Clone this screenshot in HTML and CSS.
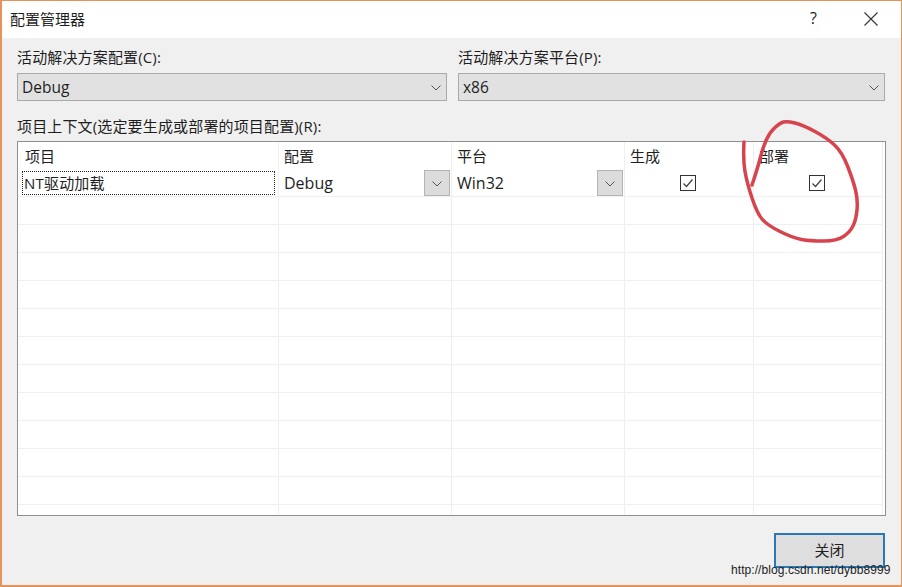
FILE: index.html
```html
<!DOCTYPE html>
<html lang="zh-CN">
<head>
<meta charset="utf-8">
<title>配置管理器</title>
<link rel="stylesheet" href="styles.css">
</head>
<body>
<div class="window">
  <header class="titlebar">
    <span class="title">配置管理器</span>
    <span class="help">?</span>
    <svg class="close" viewBox="0 0 14 14"><path d="M.5.5l13 13M13.5.5l-13 13"/></svg>
  </header>
  <main class="content">
    <div class="fields">
      <div class="field field-a">
        <label class="label">活动解决方案配置(C):</label>
        <div class="combo"><span class="combo-text">Debug</span><svg class="chev" viewBox="0 0 10 6"><path d="M.5.5L5 5 9.5.5"/></svg></div>
      </div>
      <div class="field field-b">
        <label class="label">活动解决方案平台(P):</label>
        <div class="combo"><span class="combo-text">x86</span><svg class="chev" viewBox="0 0 10 6"><path d="M.5.5L5 5 9.5.5"/></svg></div>
      </div>
    </div>
    <div class="label list-label">项目上下文(选定要生成或部署的项目配置)(R):</div>
    <div class="grid">
      <div class="row head">
        <div class="cell first">项目</div><div class="cell">配置</div><div class="cell">平台</div><div class="cell">生成</div><div class="cell">部署</div>
      </div>
      <div class="row item">
        <div class="cell"><span class="focus">NT驱动加载</span></div>
        <div class="cell drop"><span class="val">Debug</span><span class="btn"><svg class="chev" viewBox="0 0 10 6"><path d="M.5.5L5 5 9.5.5"/></svg></span></div>
        <div class="cell drop"><span class="val">Win32</span><span class="btn"><svg class="chev" viewBox="0 0 10 6"><path d="M.5.5L5 5 9.5.5"/></svg></span></div>
        <div class="cell center"><span class="check"><svg viewBox="0 0 14 14"><path d="M2.5 7.5L5.5 10.5 11.5 3.5"/></svg></span></div>
        <div class="cell center"><span class="check"><svg viewBox="0 0 14 14"><path d="M2.5 7.5L5.5 10.5 11.5 3.5"/></svg></span></div>
      </div>
      <div class="row empty"><div class="cell"></div><div class="cell"></div><div class="cell"></div><div class="cell"></div><div class="cell"></div></div>
      <div class="row empty"><div class="cell"></div><div class="cell"></div><div class="cell"></div><div class="cell"></div><div class="cell"></div></div>
      <div class="row empty"><div class="cell"></div><div class="cell"></div><div class="cell"></div><div class="cell"></div><div class="cell"></div></div>
      <div class="row empty"><div class="cell"></div><div class="cell"></div><div class="cell"></div><div class="cell"></div><div class="cell"></div></div>
      <div class="row empty"><div class="cell"></div><div class="cell"></div><div class="cell"></div><div class="cell"></div><div class="cell"></div></div>
      <div class="row empty"><div class="cell"></div><div class="cell"></div><div class="cell"></div><div class="cell"></div><div class="cell"></div></div>
      <div class="row empty"><div class="cell"></div><div class="cell"></div><div class="cell"></div><div class="cell"></div><div class="cell"></div></div>
      <div class="row empty"><div class="cell"></div><div class="cell"></div><div class="cell"></div><div class="cell"></div><div class="cell"></div></div>
      <div class="row empty"><div class="cell"></div><div class="cell"></div><div class="cell"></div><div class="cell"></div><div class="cell"></div></div>
      <div class="row empty"><div class="cell"></div><div class="cell"></div><div class="cell"></div><div class="cell"></div><div class="cell"></div></div>
      <div class="row empty"><div class="cell"></div><div class="cell"></div><div class="cell"></div><div class="cell"></div><div class="cell"></div></div>
      <div class="row tail"><div class="cell"></div><div class="cell"></div><div class="cell"></div><div class="cell"></div><div class="cell"></div></div>
    </div>
    <div class="actions"><button class="close-btn">关闭</button></div>
  </main>
  <svg class="annotation" viewBox="0 0 902 587"><path d="M744 142Q743 160 745 171.5Q747 183 752 198Q757 213 762 219Q767 225 780 231.5Q793 238 801.5 239.5Q810 241 823.5 241Q837 241 843.5 236.5Q850 232 853 226Q856 220 857 210Q858 200 855.5 190Q853 180 847.5 166Q842 152 834.5 145Q827 138 815 131.5Q803 125 795 123Q787 121 783.5 122Q780 123 775 127.5Q770 132 766.5 139.5Q763 147 760.5 157Q758 167 752 185"/></svg>
  <div class="watermark">http://blog.csdn.net/dybb8999</div>
</div>
</body>
</html>
```

FILE: styles.css
```css
* { box-sizing: border-box; }
html, body { margin: 0; padding: 0; }
body {
  width: 902px;
  height: 587px;
  overflow: hidden;
  font-family: "Open Sans", "Noto Sans CJK SC", sans-serif;
  color: #1e1e1e;
}
.window {
  position: relative;
  width: 902px;
  height: 587px;
  display: flex;
  flex-direction: column;
  border: 1px solid #e5935a;
  border-width: 1px 1px 2px 2px;
  background: #f0f0f0;
}
.titlebar {
  height: 37px;
  flex: none;
  background: #fff;
  display: flex;
  align-items: center;
  padding: 0 23px 0 8px;
}
.title { font-size: 15px; flex: 1; margin-top: -3px; }
.help { font-size: 16px; margin-right: 47px; margin-top: -3px; }
.close { width: 14px; height: 14px; margin-top: -2px; }
.close path { fill: none; stroke: #333; stroke-width: 1.1; }
.content {
  flex: 1;
  display: flex;
  flex-direction: column;
  padding: 9px 15px 0;
}
.fields { display: flex; gap: 11px; }
.field { display: flex; flex-direction: column; }
.field-a { width: 430px; }
.field-b { width: 427px; }
.label { font-size: 15px; line-height: 20px; height: 26px; letter-spacing: .15px; }
.combo {
  height: 28px;
  background: #e1e1e1;
  border: 1px solid #a9a9a9;
  display: flex;
  align-items: center;
  justify-content: space-between;
  padding: 0 5px 0 4px;
  font-size: 15.5px;
}
.chev { width: 10px; height: 6px; margin-top: 1px; }
.chev path { fill: none; stroke: #555; stroke-width: 1; }
.list-label { margin-top: 15px; height: 26px; }
.grid {
  width: 869px;
  height: 375px;
  margin-top: -1px;
  background: #fff;
  border: 1px solid #8f8f8f;
  overflow: hidden;
}
.row {
  display: grid;
  grid-template-columns: 261px 173px 173px 129px 129px;
  width: 865px;
}
.head { height: 28px; font-size: 15px; }
.item { height: 27px; }
.empty { height: 28px; }
.tail { height: 10px; }
.cell { border-right: 1px solid #efefef; border-bottom: 1px solid #efefef; min-width: 0; }
.head .cell { border-bottom: none; padding: 3px 0 0 5px; line-height: 22px; }
.head .first { padding-left: 7px; }
.tail .cell { border-bottom: none; height: 10px; }
.item .cell { font-size: 16px; line-height: 24px; }
.focus {
  display: block;
  height: 24px;
  margin: 1px 3px 0 4px;
  padding-left: 1px;
  line-height: 22px;
  border: 1px dotted #222;
  font-size: 15px;
  letter-spacing: .2px;
}
.drop { display: flex; justify-content: space-between; padding-left: 5px; }
.val { padding-top: 1px; }
.btn {
  width: 26px;
  height: 26px;
  margin-right: 1px;
  background: #dcdcdc;
  border: 1px solid #b4b4b4;
  display: flex;
  align-items: center;
  justify-content: center;
}
.center { display: flex; align-items: center; justify-content: center; }
.check {
  width: 16px;
  height: 16px;
  margin-right: 2px;
  border: 1px solid #333;
  background: #fff;
  display: flex;
}
.check svg { width: 14px; height: 14px; }
.check path { fill: none; stroke: #444; stroke-width: 1.3; }
.actions { display: flex; justify-content: flex-end; margin-top: 17px; }
.close-btn {
  width: 111px;
  height: 35px;
  margin-right: 1px;
  background: #dedede;
  border: 2px solid #2a79b5;
  font: 15px "Noto Sans CJK SC", sans-serif;
  color: #1e1e1e;
  padding: 0 0 2px;
}
.annotation {
  position: absolute;
  left: -2px;
  top: -1px;
  width: 902px;
  height: 587px;
  pointer-events: none;
}
.annotation path { fill: none; stroke: #d8444e; stroke-width: 3.5; stroke-linecap: round; stroke-linejoin: round; }
.watermark {
  position: absolute;
  left: 729px;
  top: 561px;
  font: 12px/16px "Liberation Sans", Arial, sans-serif;
  letter-spacing: .07px;
  color: #222;
  white-space: nowrap;
}
```
